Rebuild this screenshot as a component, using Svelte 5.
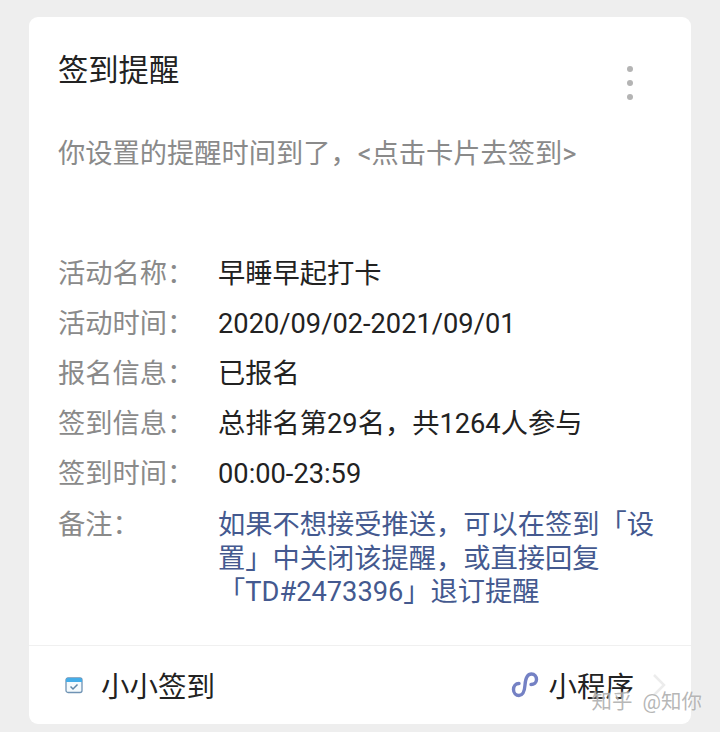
<script>
  const rows = [
    { label: '活动名称：', value: '早睡早起打卡' },
    { label: '活动时间：', value: '2020/09/02-2021/09/01' },
    { label: '报名信息：', value: '已报名' },
    { label: '签到信息：', value: '总排名第29名，共1264人参与' },
    { label: '签到时间：', value: '00:00-23:59' }
  ];
</script>

<div class="page">
  <main class="card">
    <section class="body">
      <header class="head">
        <h1>签到提醒</h1>
        <div class="dots"><i></i><i></i><i></i></div>
      </header>
      <p class="intro">你设置的提醒时间到了，&lt;点击卡片去签到&gt;</p>
      <div class="rows">
        {#each rows as r}
          <div class="row"><span class="label">{r.label}</span><span class="value">{r.value}</span></div>
        {/each}
        <div class="row note">
          <span class="label">备注：</span>
          <span class="value link">如果不想接受推送，可以在签到「设置」中关闭该提醒，或直接回复「TD#2473396」退订提醒</span>
        </div>
      </div>
    </section>
    <footer class="foot">
      <div class="app">
        <svg class="cal" width="18" height="18" viewBox="0 0 18 18">
          <rect x="1" y="2" width="16" height="14.5" rx="2" fill="#f4fafd" stroke="#6f93b4" stroke-width="1.3"/>
          <path d="M1 4a2 2 0 0 1 2-2h12a2 2 0 0 1 2 2v2H1z" fill="#45ade8"/>
          <path d="M5.5 10.500l2.500 2.500 4.500-4.500" fill="none" stroke="#5f86a8" stroke-width="1.500"/>
        </svg>
        <span>小小签到</span>
      </div>
      <div class="mini">
        <svg width="28" height="27" viewBox="0 0 28 27">
          <path d="M8 12.500C4.500 12.500 2.500 15.500 2.500 18.500C2.500 22 5 24.500 8 24.500C11.500 24.500 13.500 21 14 14C14.500 7 17 3 20.500 3C23.500 3 25.500 5.500 25.500 8.500C25.500 11.500 23 13.500 20 13.500" fill="none" stroke="#7481c4" stroke-width="3.400" stroke-linecap="round"/>
        </svg>
        <span>小程序</span>
        <svg class="chev" width="14" height="24" viewBox="0 0 14 24"><path d="M2 2l10 10-10 10" fill="none" stroke="#ececec" stroke-width="2.500"/></svg>
      </div>
    </footer>
  </main>
  <div class="mark">知乎 @知你</div>
</div>

<style>
  :global(body) { margin: 0; }
  .page {
    position: relative;
    box-sizing: border-box;
    width: 720px;
    height: 732px;
    padding: 17px 29px 8px;
    background: #eeeeee;
    font-family: Roboto, "Noto Sans CJK SC", "Liberation Sans", sans-serif;
    overflow: hidden;
  }
  .card {
    height: 100%;
    background: #fff;
    border-radius: 9px;
    display: flex;
    flex-direction: column;
  }
  .body { flex: 1; padding: 31px 0 0 29px; }
  .head { display: flex; justify-content: space-between; }
  h1 {
    margin: 0;
    font-size: 30.300px;
    line-height: 46px;
    font-weight: 400;
    color: #222;
  }
  .dots {
    display: flex;
    flex-direction: column;
    gap: 8px;
    margin: 18px 58px 0 0;
  }
  .dots i { width: 6px; height: 6px; border-radius: 50%; background: #b4b4b4; }
  .intro {
    margin: 0;
    padding-top: 34px;
    font-size: 27.250px;
    line-height: 40px;
    color: #8a8a8a;
  }
  .rows { margin-top: 75px; }
  .row { display: flex; font-size: 27.250px; line-height: 50px; color: #222; }
  .label { width: 160px; flex: none; color: #8a8a8a; }
  .value { flex: 1; padding-right: 36px; }
  .note { line-height: 33.500px; padding-top: 10px; }
  .link { color: #44598f; }
  .foot {
    height: 79px;
    box-sizing: border-box;
    border-top: 1px solid #f0f0f0;
    display: flex;
    justify-content: space-between;
    align-items: center;
    padding: 0 25px 2px 36px;
    font-size: 28.500px;
    color: #222;
  }
  .app, .mini { display: flex; align-items: center; }
  .cal { margin: 2px 18px 0 0; }
  .mini svg:first-child { margin-right: 9px; }
  .chev { margin: 2px 0 0 18px; }
  .mark {
    position: absolute;
    right: 18px;
    top: 689px;
    font-size: 20.500px;
    line-height: 26px;
    word-spacing: 5px;
    color: rgba(170, 170, 170, 0.85);
    text-shadow: 0 0 2px rgba(255, 255, 255, 0.8);
  }
</style>
